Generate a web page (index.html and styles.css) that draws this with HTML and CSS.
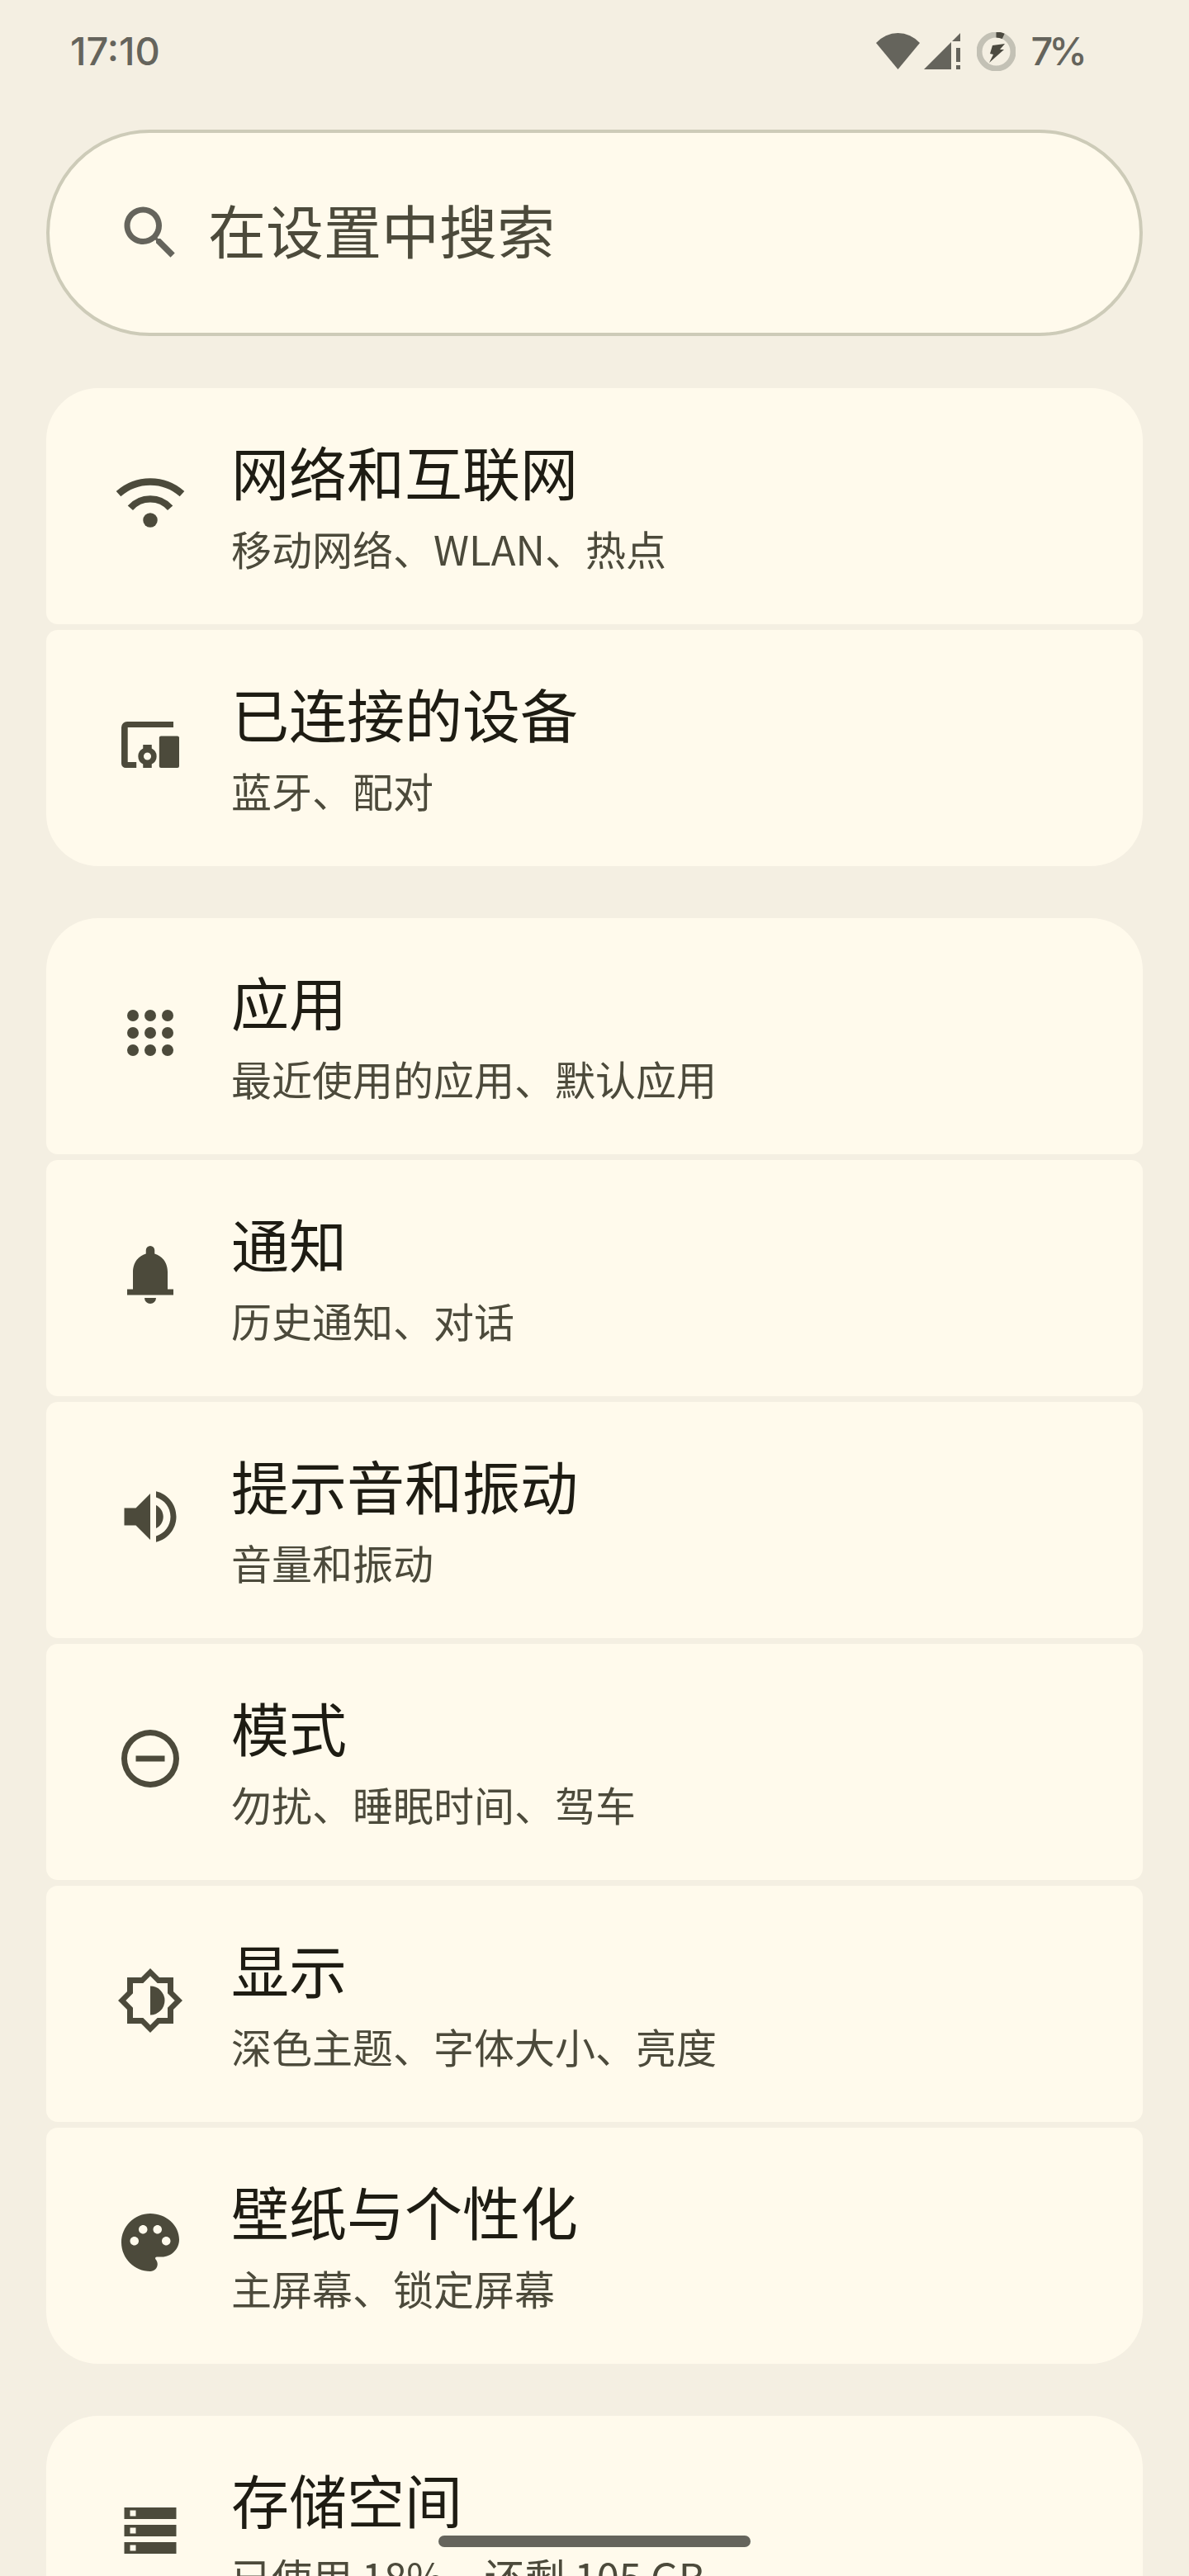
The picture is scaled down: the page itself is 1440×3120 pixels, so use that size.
FILE: index.html
```html
<!DOCTYPE html>
<html lang="zh-CN">
<head>
    <meta charset="UTF-8">
    <title>设置</title>
    <link rel="stylesheet" href="styles.css">
</head>
<body>
    <div id="screen">
        <!-- Status bar -->
        <div class="status-bar">
            <span class="status-text">17:10</span>
            <div class="status-icons">
                <svg class="status-wifi" width="53" height="44" viewBox="0 0 53 44"><path d="M0 12A35.3 35.3 0 0 1 53 12L26.5 44Z"/></svg>
                <svg class="status-signal" width="44" height="44" viewBox="0 0 44 44"><path d="M0 44H33V11ZM34 10L44 0V10ZM39 18H44V35H39ZM39 39H44V44H39Z"/></svg>
                <svg class="status-battery" width="47" height="47" viewBox="0 0 47 47">
                    <circle class="battery-ring" cx="23.5" cy="23.5" r="20.5"/>
                    <path class="battery-level" d="M23.5 3A20.5 20.5 0 0 1 32.2 4.9"/>
                    <path class="battery-bolt" d="M19 16L34 14L28 21L33 21L15 37L20 27L16 26Z"/>
                </svg>
                <span class="status-text status-percent">7%</span>
            </div>
        </div>

        <!-- Search -->
        <div class="search-box">
            <svg class="search-icon" viewBox="0 0 24 24"><path d="M15.5 14h-.79l-.28-.27C15.41 12.59 16 11.11 16 9.5 16 5.91 13.09 3 9.5 3S3 5.91 3 9.5 5.91 16 9.5 16c1.61 0 3.09-.59 4.23-1.57l.27.28v.79l5 4.99L20.49 19l-4.99-5zm-6 0C7.01 14 5 11.99 5 9.5S7.01 5 9.5 5 14 7.01 14 9.5 11.99 14 9.5 14z"/></svg>
            <span class="search-text">在设置中搜索</span>
        </div>

        <!-- Network and devices -->
        <div class="group">
            <div class="row">
                <svg class="icon" viewBox="0 0 24 24">
                    <path class="wifi-arc" d="M1 8.9A16.5 16.5 0 0 1 23 8.9"/>
                    <path class="wifi-arc" d="M5.1 13.8A9.2 9.2 0 0 1 18.9 13.8"/>
                    <circle cx="12" cy="18" r="2.5"/>
                </svg>
                <div class="row-text">
                    <div class="title">网络和互联网</div>
                    <div class="summary">移动网络、WLAN、热点</div>
                </div>
            </div>
            <div class="row">
                <svg class="icon" viewBox="0 0 24 24">
                    <path d="M20 4H4a2 2 0 0 0-2 2V18.500a1.500 1.500 0 0 0 1.500 1.500H7.200V18H4.200V6H20Z"/>
                    <path d="M15.700 9H21.400a.6.6 0 0 1 .6.6V19.400a.6.6 0 0 1-.6.6H15.700a.6.6 0 0 1-.6-.6V9.600a.6.6 0 0 1 .6-.6Z"/>
                    <path fill-rule="evenodd" d="M9.500 12H12.500V13.300A3 3 0 0 1 12.500 18.700V20H9.500V18.700A3 3 0 0 1 9.500 13.300ZM11 14.700a1.300 1.300 0 1 0 0 2.600 1.300 1.300 0 0 0 0-2.600Z"/>
                </svg>
                <div class="row-text">
                    <div class="title">已连接的设备</div>
                    <div class="summary">蓝牙、配对</div>
                </div>
            </div>
        </div>

        <!-- Apps, sound, display -->
        <div class="group">
            <div class="row">
                <svg class="icon" viewBox="0 0 24 24">
                    <circle cx="6" cy="6" r="2"/><circle cx="12" cy="6" r="2"/><circle cx="18" cy="6" r="2"/>
                    <circle cx="6" cy="12" r="2"/><circle cx="12" cy="12" r="2"/><circle cx="18" cy="12" r="2"/>
                    <circle cx="6" cy="18" r="2"/><circle cx="12" cy="18" r="2"/><circle cx="18" cy="18" r="2"/>
                </svg>
                <div class="row-text">
                    <div class="title">应用</div>
                    <div class="summary">最近使用的应用、默认应用</div>
                </div>
            </div>
            <div class="row">
                <svg class="icon" viewBox="0 0 24 24"><path d="M4 19v-2h2v-6c0-3.100 1.800-5.500 4.500-6.300V3.500a1.500 1.500 0 0 1 3 0v1.200C16.200 5.500 18 7.900 18 11v6h2v2zM10 20h4a2 2 0 0 1-4 0z"/></svg>
                <div class="row-text">
                    <div class="title">通知</div>
                    <div class="summary">历史通知、对话</div>
                </div>
            </div>
            <div class="row">
                <svg class="icon" viewBox="0 0 24 24"><path d="M3 9v6h4l5 5V4L7 9H3zm13.500 3c0-1.770-1.020-3.290-2.500-4.030v8.050c1.480-.73 2.500-2.250 2.500-4.020zM14 3.230v2.060c2.890.86 5 3.540 5 6.710s-2.110 5.850-5 6.710v2.060c4.010-.91 7-4.490 7-8.770s-2.990-7.860-7-8.770z"/></svg>
                <div class="row-text">
                    <div class="title">提示音和振动</div>
                    <div class="summary">音量和振动</div>
                </div>
            </div>
            <div class="row">
                <svg class="icon" viewBox="0 0 24 24"><path fill-rule="evenodd" d="M12 2a10 10 0 1 0 0 20 10 10 0 0 0 0-20zm0 2a8 8 0 1 1 0 16 8 8 0 0 1 0-16zM7 11h10v2H7z"/></svg>
                <div class="row-text">
                    <div class="title">模式</div>
                    <div class="summary">勿扰、睡眠时间、驾车</div>
                </div>
            </div>
            <div class="row">
                <svg class="icon" viewBox="0 0 24 24"><path fill-rule="evenodd" d="M20 15.140L23.140 12 20 8.860V4h-4.860L12 .86 8.860 4H4v4.860L.86 12 4 15.140V20h4.860L12 23.140 15.140 20H20zM18 14.480V18h-3.520L12 20.480 9.520 18H6v-3.520L3.520 12 6 9.520V6h3.520L12 3.520 14.480 6H18v3.520L20.480 12zM12 7v10a5 5 0 0 0 0-10z"/></svg>
                <div class="row-text">
                    <div class="title">显示</div>
                    <div class="summary">深色主题、字体大小、亮度</div>
                </div>
            </div>
            <div class="row">
                <svg class="icon" viewBox="0 0 24 24"><path d="M12 2C6.490 2 2 6.490 2 12s4.490 10 10 10c1.380 0 2.500-1.120 2.500-2.500 0-.61-.23-1.200-.64-1.670-.08-.1-.13-.21-.13-.33 0-.28.22-.5.5-.5H16c3.310 0 6-2.690 6-6 0-4.960-4.490-9-10-9zm-5.500 11c-.83 0-1.500-.67-1.500-1.500S5.670 10 6.500 10 8 10.670 8 11.500 7.330 13 6.500 13zm3-4C8.670 9 8 8.330 8 7.500S8.670 6 9.500 6s1.500.67 1.500 1.500S10.330 9 9.500 9zm5 0c-.83 0-1.500-.67-1.500-1.500S13.670 6 14.500 6s1.500.67 1.500 1.500S15.330 9 14.500 9zm3 4c-.83 0-1.500-.67-1.500-1.500s.67-1.500 1.500-1.500 1.500.67 1.500 1.500-.67 1.500-1.500 1.500z"/></svg>
                <div class="row-text">
                    <div class="title">壁纸与个性化</div>
                    <div class="summary">主屏幕、锁定屏幕</div>
                </div>
            </div>
        </div>

        <!-- Storage, cut off by the screen edge -->
        <div class="group">
            <div class="row">
                <svg class="icon" viewBox="0 0 24 24"><path fill-rule="evenodd" d="M3 4h18v4H3zM5 5v2h2V5zM3 10h18v4H3zM5 11v2h2v-2zM3 16h18v4H3zM5 17v2h2v-2z"/></svg>
                <div class="row-text">
                    <div class="title">存储空间</div>
                    <div class="summary">已使用 18%，还剩 105 GB</div>
                </div>
            </div>
        </div>

        <!-- Gesture handle sits over the list -->
        <div class="home-handle"></div>
    </div>
</body>
</html>
```

FILE: styles.css
```css
/* Page */
html, body {
    margin: 0;
    padding: 0;
}

body {
    background-color: #f4efe2;
    font-family: "Noto Sans CJK SC", "Noto Sans", sans-serif;
}

#screen {
    position: relative;
    width: 1440px;
    height: 3120px;
    padding: 0 56px;
    box-sizing: border-box;
    overflow: hidden;
}

/* Status bar */
.status-bar {
    display: flex;
    justify-content: space-between;
    align-items: center;
    height: 124px;
    margin-bottom: 33px;
    padding: 0 72px 0 29px;
}

.status-text {
    font-family: "Inter", sans-serif;
    font-size: 47px;
    font-weight: 500;
    line-height: 56px;
    color: #65645c;
}

.status-percent {
    letter-spacing: -5px;
}

.status-icons {
    display: flex;
    align-items: center;
}

.status-wifi, .status-signal {
    fill: #65645c;
}

.status-signal {
    margin-left: 5px;
}

.status-battery {
    margin: 0 18px 0 20px;
    fill: none;
}

.battery-ring {
    stroke: #c3c1b5;
    stroke-width: 7;
}

.battery-level {
    stroke: #4c4a40;
    stroke-width: 7;
}

.battery-bolt {
    fill: #4c4a40;
}

/* Search */
.search-box {
    display: flex;
    align-items: center;
    gap: 28px;
    height: 250px;
    margin-bottom: 2px;
    padding-left: 80px;
    box-sizing: border-box;
    background-color: #fffaec;
    border: 4px solid #cdcbb8;
    border-radius: 125px;
}

.search-icon {
    width: 84px;
    height: 84px;
    fill: #65645c;
}

.search-text {
    margin-bottom: 8px;
    font-size: 70px;
    line-height: 92px;
    color: #4c4a3b;
}

/* Setting groups */
.group {
    display: flex;
    flex-direction: column;
    gap: 7px;
    margin-top: 63px;
}

.row {
    display: flex;
    align-items: center;
    gap: 56px;
    height: 286px;
    flex-shrink: 0;
    padding-left: 84px;
    box-sizing: border-box;
    background-color: #fffaec;
    border-radius: 14px;
}

.row:first-child {
    border-top-left-radius: 63px;
    border-top-right-radius: 63px;
}

.row:last-child {
    border-bottom-left-radius: 63px;
    border-bottom-right-radius: 63px;
}

.icon {
    width: 84px;
    height: 84px;
    margin-bottom: 8px;
    flex-shrink: 0;
    fill: #4c4a3b;
}

.wifi-arc {
    fill: none;
    stroke: #4c4a3b;
    stroke-width: 2.4;
}

.row-text {
    padding-bottom: 2px;
}

.title {
    font-size: 70px;
    line-height: 92px;
    color: #1e1c13;
}

.summary {
    margin-top: 12px;
    font-size: 49px;
    line-height: 70px;
    color: #4c4a3b;
}

/* Gesture handle */
.home-handle {
    position: absolute;
    left: 531px;
    top: 3071px;
    width: 378px;
    height: 14px;
    border-radius: 7px;
    background-color: #65645c;
}
```
